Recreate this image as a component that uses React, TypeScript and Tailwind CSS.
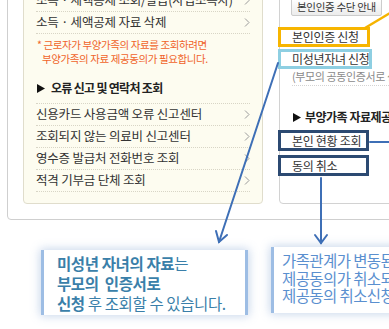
import type { ReactNode } from 'react';

const topRows = ['소득 · 세액공제 조회/발급(사업소득자)', '소득 · 세액공제 자료 삭제'];
const errorRows = [
  '신용카드 사용금액 오류 신고센터',
  '조회되지 않는 의료비 신고센터',
  '영수증 발급처 전화번호 조회',
  '적격 기부금 단체 조회',
];

function Chevron() {
  return (
    <svg width="6" height="9" viewBox="0 0 6 9" className="shrink-0">
      <polyline points="1,0.5 5,4.5 1,8.5" fill="none" stroke="#9a9a9a" strokeWidth="1" />
    </svg>
  );
}

function Triangle() {
  return (
    <svg width="8" height="9" viewBox="0 0 8 9" className="shrink-0">
      <polygon points="0,0 8,4.5 0,9" fill="#111" />
    </svg>
  );
}

function MenuRow({ label }: { label: string }) {
  return (
    <li className="mx-[12px] flex h-[22px] items-center justify-between border-b border-dotted border-[#d8d5c6]">
      <span className="whitespace-nowrap text-[12.5px] tracking-[-0.2px] text-[#333]">{label}</span>
      <Chevron />
    </li>
  );
}

function Highlight({ color, width, height, children }: { color: string; width: string; height: string; children: ReactNode }) {
  return (
    <div className={`-ml-[2px] flex items-center border-[3px] pl-[11px] ${color} ${width} ${height}`}>
      <span className="whitespace-nowrap text-[12px] tracking-[-0.3px] text-[#333]">{children}</span>
    </div>
  );
}

/** Connector lines and arrowheads drawn over the menu panels. */
function Connectors() {
  return (
    <svg className="pointer-events-none absolute left-0 top-0" width="389" height="329" viewBox="0 0 389 329">
      <line x1="365" y1="28" x2="390" y2="13" stroke="#f5b300" strokeWidth="2.5" />
      <g fill="none" stroke="#3e6fb6" strokeWidth="2" strokeLinecap="round">
        <line x1="278" y1="63" x2="219" y2="242" />
        <polyline points="216,231 219,242 227,235" />
        <line x1="370" y1="142" x2="390" y2="142" />
        <line x1="321" y1="178" x2="321" y2="243" />
        <polyline points="315,235 321,243 327,235" />
      </g>
    </svg>
  );
}

export default function App() {
  return (
    <div className="relative h-[329px] w-[389px] overflow-hidden bg-white font-['Noto_Sans_CJK_KR','Noto_Sans',sans-serif]">
      <div className="-mt-[22px] ml-[7px] w-[420px] rounded-[4px] border border-[#cfcfcf] pb-[15px] pl-[15px] pt-[10px]">
        <div className="flex gap-[16px]">
          {/* left menu */}
          <div className="w-[240px] shrink-0 rounded-[4px] border border-[#e0ddcc] bg-[#fdfcf0] pb-[11px]">
            <ul>
              {topRows.map((r) => (
                <MenuRow key={r} label={r} />
              ))}
            </ul>
            <p className="pl-[13px] pt-[4px] text-[10.5px] leading-[14px] tracking-[-0.4px] text-[#f0642a]">
              * 근로자가 부양가족의 자료를 조회하려면
              <br />
              <span className="pl-[5px]">부양가족의 자료 제공동의가 필요합니다.</span>
            </p>
            <div className="mx-[12px] flex items-center gap-[6px] border-b border-dotted border-[#d8d5c6] pb-[7px] pl-[1px] pt-[14px]">
              <Triangle />
              <h3 className="text-[12px] font-bold leading-[16px] tracking-[-0.7px] text-[#222]">오류 신고 및 연락처 조회</h3>
            </div>
            <ul>
              {errorRows.map((r) => (
                <MenuRow key={r} label={r} />
              ))}
            </ul>
          </div>

          {/* right menu */}
          <div className="flex-1 rounded-[4px] border border-[#d2d2d2] bg-white pt-[8px]">
            <button
              type="button"
              className="ml-[11px] flex h-[18px] w-[91px] items-center justify-center rounded-[2px] border border-[#cccccc] bg-gradient-to-b from-white to-[#ececec] text-[10.5px] tracking-[-0.3px] text-[#333]"
            >
              본인인증 수단 안내
            </button>
            <div className="mt-[11px]">
              <Highlight color="border-[#f7b500]" width="w-[92px]" height="h-[20px]">
                본인인증 신청
              </Highlight>
            </div>
            <div className="mt-[2px]">
              <Highlight color="border-[#8ecfe2]" width="w-[94px]" height="h-[20px]">
                미성년자녀 신청
              </Highlight>
            </div>
            <div className="ml-[12px] border-b border-dotted border-[#d4d4d4] pb-[2px]">
              <p className="whitespace-nowrap text-[11px] leading-[14px] tracking-[-0.4px] text-[#8a8a8a]">
                (부모의 공동인증서로 신청)
              </p>
            </div>
            <div className="ml-[13px] flex items-center gap-[4px] pt-[23px]">
              <Triangle />
              <h3 className="whitespace-nowrap text-[12px] font-bold leading-[16px] tracking-[-0.5px] text-[#222]">
                부양가족 자료제공동의
              </h3>
            </div>
            <div className="mt-[5px]">
              <Highlight color="border-[#2c4a72]" width="w-[91px]" height="h-[21px]">
                본인 현황 조회
              </Highlight>
            </div>
            <div className="mt-[4px]">
              <Highlight color="border-[#2c4a72]" width="w-[91px]" height="h-[21px]">
                동의 취소
              </Highlight>
            </div>
          </div>
        </div>
      </div>

      {/* callouts */}
      <div className="mt-[30px] flex items-start pl-[41px]">
        <div className="h-[65px] w-[207px] shrink-0 border-x-[3px] border-[#9dbde4] bg-white pl-[13px] pt-[3px] text-[15.5px] leading-[20px] tracking-[-0.4px] text-[#3a7fa9] shadow-[0_0_9px_1px_rgba(130,165,210,0.45)]">
          <p className="whitespace-nowrap">
            <b>미성년 자녀의 자료</b>는
          </p>
          <p className="whitespace-nowrap">
            <b>부모의&nbsp; 인증서로</b>
          </p>
          <p className="whitespace-nowrap">
            <b>신청</b> 후 조회할 수 있습니다.
          </p>
        </div>
        <div className="-mt-[3px] ml-[23px] h-[66px] w-[200px] shrink-0 border-l-[3px] border-[#9dbde4] bg-white pl-[8px] pt-[5px] text-[15.5px] leading-[17.5px] tracking-[-0.6px] text-[#5a8fcf] shadow-[0_0_9px_1px_rgba(130,165,210,0.45)]">
          <p className="whitespace-nowrap">가족관계가 변동된 경우</p>
          <p className="whitespace-nowrap">제공동의가 취소되지 않으므로</p>
          <p className="whitespace-nowrap">제공동의 취소신청을 하세요.</p>
        </div>
      </div>

      <Connectors />
    </div>
  );
}
